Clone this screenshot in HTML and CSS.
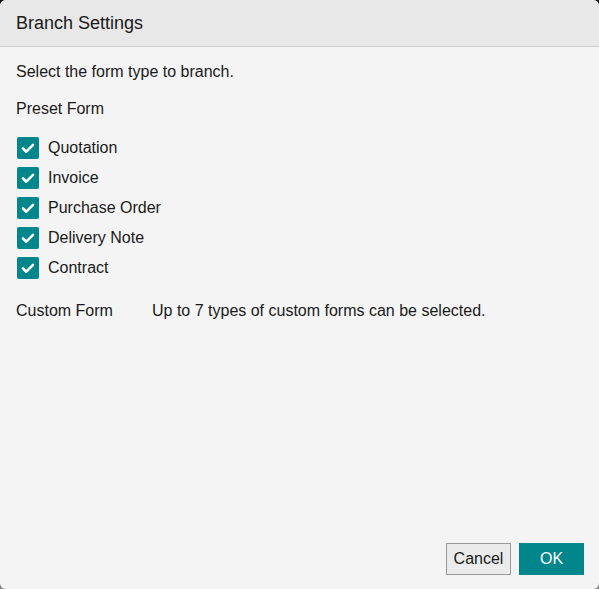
FILE: index.html
```html
<!DOCTYPE html>
<html>
<head>
<meta charset="utf-8">
<link rel="stylesheet" href="styles.css">
</head>
<body>
<div class="dialog">
  <div class="header">Branch Settings</div>
  <div class="content">
    <p class="intro">Select the form type to branch.</p>
    <p class="section">Preset Form</p>
    <ul class="checks">
      <li><span class="box"><svg viewBox="0 0 22 22" width="22" height="22"><path d="M6 11.5l3.3 3.2L16 7.8" fill="none" stroke="#fff" stroke-width="2.6" stroke-linecap="round" stroke-linejoin="round"/></svg></span>Quotation</li>
      <li><span class="box"><svg viewBox="0 0 22 22" width="22" height="22"><path d="M6 11.5l3.3 3.2L16 7.8" fill="none" stroke="#fff" stroke-width="2.6" stroke-linecap="round" stroke-linejoin="round"/></svg></span>Invoice</li>
      <li><span class="box"><svg viewBox="0 0 22 22" width="22" height="22"><path d="M6 11.5l3.3 3.2L16 7.8" fill="none" stroke="#fff" stroke-width="2.6" stroke-linecap="round" stroke-linejoin="round"/></svg></span>Purchase Order</li>
      <li><span class="box"><svg viewBox="0 0 22 22" width="22" height="22"><path d="M6 11.5l3.3 3.2L16 7.8" fill="none" stroke="#fff" stroke-width="2.6" stroke-linecap="round" stroke-linejoin="round"/></svg></span>Delivery Note</li>
      <li><span class="box"><svg viewBox="0 0 22 22" width="22" height="22"><path d="M6 11.5l3.3 3.2L16 7.8" fill="none" stroke="#fff" stroke-width="2.6" stroke-linecap="round" stroke-linejoin="round"/></svg></span>Contract</li>
    </ul>
    <div class="custom">
      <span class="custom-label">Custom Form</span>
      <span>Up to 7 types of custom forms can be selected.</span>
    </div>
  </div>
  <div class="footer">
    <button class="btn cancel">Cancel</button>
    <button class="btn ok">OK</button>
  </div>
</div>
</body>
</html>
```

FILE: styles.css
```css
html, body {
  margin: 0;
  padding: 0;
  width: 599px;
  height: 589px;
  overflow: hidden;
}
body {
  background: linear-gradient(#111 0%, #444 50%, #888 100%);
  font-family: "Liberation Sans", Arial, sans-serif;
  color: #1a1a1a;
}
.dialog {
  width: 599px;
  height: 589px;
  background: #f4f4f4;
  border-radius: 6px;
  overflow: hidden;
  display: flex;
  flex-direction: column;
}
.header {
  height: 47px;
  box-sizing: border-box;
  background: #e8e8e8;
  border-bottom: 1px solid #cfcfcf;
  font-size: 18px;
  line-height: 44px;
  padding: 1px 0 0 16px;
}
.content {
  flex: 1;
  padding: 15px 16px 0;
  font-size: 16px;
}
.intro {
  margin: 0;
  line-height: 20px;
}
.section {
  margin: 17px 0 0;
  line-height: 20px;
}
.checks {
  list-style: none;
  margin: 14px 0 0;
  padding: 0;
}
.checks li {
  display: flex;
  align-items: center;
  height: 30px;
  margin-left: 1px;
}
.box {
  width: 22px;
  height: 22px;
  background: #00868b;
  border-radius: 2px;
  margin-right: 9px;
  display: flex;
}
.custom {
  display: flex;
  margin-top: 18px;
  line-height: 20px;
}
.custom-label {
  width: 136px;
}
.footer {
  display: flex;
  justify-content: flex-end;
  gap: 8px;
  padding: 0 15px 14px;
}
.btn {
  height: 32px;
  min-width: 65px;
  font-family: "Liberation Sans", Arial, sans-serif;
  font-size: 16px;
  border-radius: 0;
  cursor: pointer;
}
.cancel {
  background: #ebebeb;
  border: 1px solid #9a9a9a;
  color: #1a1a1a;
}
.ok {
  background: #00868b;
  border: none;
  color: #fff;
}
```
